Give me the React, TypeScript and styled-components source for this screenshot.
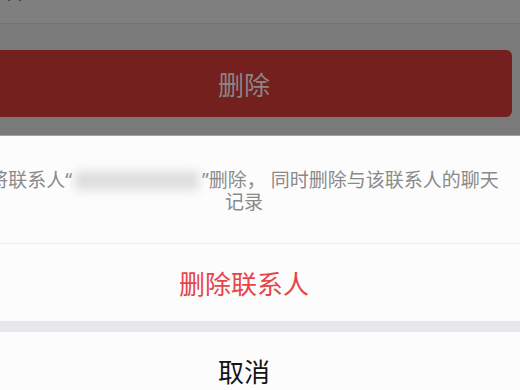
import styled, { createGlobalStyle } from "styled-components";

// 페이지 기본 스타일
const GlobalStyle = createGlobalStyle`
  html, body {
    margin: 0;
    padding: 0;
    height: 390px;
    overflow: hidden;
    background-color: #7a7a7a;
  }

  body {
    font-family: "Noto Sans CJK SC", "Noto Sans", sans-serif;
  }
`;

// 화면 (잘린 스크린샷이라 왼쪽으로 밀려 있음)
const Screen = styled.div`
  display: flex;
  flex-direction: column;
  width: 568px;
  margin-left: -40px;
  background-color: #7a7a7a;

  & > * {
    flex-shrink: 0;
  }
`;

// 위쪽 셀 (마스크 아래)
const TopCell = styled.div`
  display: flex;
  align-items: flex-start;
  height: 23px;
  padding-left: 45px;
  background-color: #7f7f7f;
  border-bottom: 1px solid #737373;
  overflow: hidden;
`;

const TopLabel = styled.span`
  margin-top: -19px;
  font-size: 19px;
  line-height: 19px;
  color: #1e1e1e;
`;

// 빨간 삭제 버튼 (마스크 아래)
const DangerButton = styled.div`
  display: flex;
  justify-content: center;
  align-items: center;
  height: 67px;
  margin: 26px 16px 0;
  border-radius: 6px;
  background-color: #73201f;
  color: #8c8585;
  font-size: 26px;
`;

// 액션 시트
const Sheet = styled.div`
  display: flex;
  flex-direction: column;
  margin-top: 18px;
  border-top: 1px solid #a3a3a3;
  background-color: #fcfcfd;
`;

const Message = styled.div`
  display: flex;
  justify-content: center;
  align-items: center;
  height: 108px;
  padding: 4px 24px 0;
  box-sizing: border-box;
  border-bottom: 1px solid #ececee;
  color: #8a8a8a;
  font-family: "Noto Sans", "Noto Sans CJK SC", sans-serif;
  font-size: 19px;
  line-height: 21px;
  text-align: center;
`;

// 가려진 연락처 이름
const BlurredName = styled.span`
  display: inline-block;
  width: 124px;
  margin: 0 3px;
  color: #dedede;
  filter: blur(5px);
  vertical-align: middle;
  white-space: nowrap;
  overflow: hidden;
`;

const ActionRow = styled.div<{ $danger?: boolean }>`
  display: flex;
  justify-content: center;
  align-items: center;
  height: 77px;
  color: ${(p) => (p.$danger ? "#e64549" : "#151515")};
  font-size: 26px;
`;

const Gap = styled.div`
  height: 11px;
  background-color: #e8e8ec;
`;

function App() {
  return (
    <>
      <GlobalStyle />
      <Screen>
        <TopCell>
          <TopLabel>备注</TopLabel>
        </TopCell>
        <DangerButton>删除</DangerButton>
        <Sheet>
          <Message>
            <span>
              将联系人“<BlurredName>███████ ███</BlurredName>”删除， 同时删除与该联系人的聊天记录
            </span>
          </Message>
          <ActionRow $danger>删除联系人</ActionRow>
          <Gap />
          <ActionRow>取消</ActionRow>
        </Sheet>
      </Screen>
    </>
  );
}

export default App;
